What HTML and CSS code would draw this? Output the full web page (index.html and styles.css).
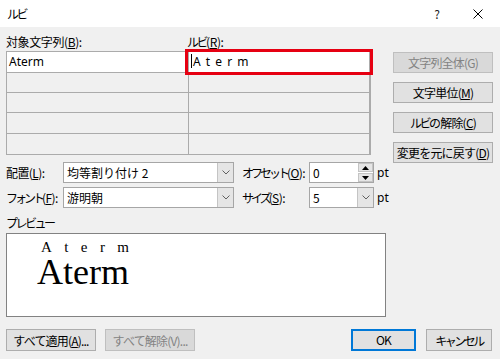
FILE: index.html
```html
<!DOCTYPE html>
<html lang="ja">
<head>
  <meta charset="UTF-8"/>
  <title>ルビ</title>
  <link rel="stylesheet" href="styles.css">
</head>
<body>

  <div class="titlebar">
    <span class="kana">ルビ</span>
    <div class="title-buttons">
      <span class="help">?</span>
      <svg class="close" width="10" height="10" viewBox="0 0 10 10">
        <path d="M0.5 0.5 L9.5 9.5 M9.5 0.5 L0.5 9.5" stroke="#000" stroke-width="1" fill="none"/>
      </svg>
    </div>
  </div>

  <div class="dialog">

    <div class="top-section">
      <div class="ruby-area">
        <div class="col-labels">
          <span>対象文字列(<u>B</u>):</span>
          <span><span class="kana">ルビ</span>(<u>R</u>):</span>
        </div>
        <div class="ruby-grid">
          <div class="cell active">Aterm</div>
          <div class="cell active"><span class="caret"></span><span class="spaced">A t e r m</span></div>
          <div class="cell"></div><div class="cell"></div>
          <div class="cell"></div><div class="cell"></div>
          <div class="cell"></div><div class="cell"></div>
          <div class="cell"></div><div class="cell"></div>
        </div>
        <!-- annotation box -->
        <div class="highlight"></div>
      </div>

      <div class="side-buttons">
        <button class="btn" disabled>文字列全体(G)</button>
        <button class="btn">文字単位(<u>M</u>)</button>
        <button class="btn"><span class="kana">ルビ</span>の解除(<u>C</u>)</button>
        <button class="btn">変更を元に戻す(<u>D</u>)</button>
      </div>
    </div>

    <div class="options">
      <label>配置(<u>L</u>):</label>
      <div class="combo">
        <span class="combo-text">均等割り付け 2</span>
        <span class="combo-arrow"><svg width="8" height="5" viewBox="0 0 8 5"><path d="M0.5 0.5 L4 4 L7.5 0.5" stroke="#606060" fill="none"/></svg></span>
      </div>
      <label class="opt-label"><span class="kana">オフセット</span>(<u>O</u>):</label>
      <div class="combo spin">
        <span class="combo-text">0</span>
        <span class="spin-buttons">
          <span class="spin-btn"><svg width="7" height="4" viewBox="0 0 7 4"><path d="M0 4 L3.5 0 L7 4 Z" fill="#000"/></svg></span>
          <span class="spin-btn"><svg width="7" height="4" viewBox="0 0 7 4"><path d="M0 0 L3.5 4 L7 0 Z" fill="#000"/></svg></span>
        </span>
      </div>
      <span class="unit">pt</span>

      <label><span class="kana">フォント</span>(<u>F</u>):</label>
      <div class="combo">
        <span class="combo-text">游明朝</span>
        <span class="combo-arrow"><svg width="8" height="5" viewBox="0 0 8 5"><path d="M0.5 0.5 L4 4 L7.5 0.5" stroke="#606060" fill="none"/></svg></span>
      </div>
      <label class="opt-label"><span class="kana">サイズ</span>(<u>S</u>):</label>
      <div class="combo">
        <span class="combo-text">5</span>
        <span class="combo-arrow"><svg width="8" height="5" viewBox="0 0 8 5"><path d="M0.5 0.5 L4 4 L7.5 0.5" stroke="#606060" fill="none"/></svg></span>
      </div>
      <span class="unit">pt</span>
    </div>

    <div class="preview-label kana">プレビュー</div>
    <div class="preview">
      <div class="preview-ruby">
        <span>A</span><span>t</span><span>e</span><span>r</span><span>m</span>
      </div>
      <div class="preview-base">Aterm</div>
    </div>

    <div class="bottom-buttons">
      <button class="btn wide">すべて適用(<u>A</u>)...</button>
      <button class="btn wide" disabled>すべて解除(V)...</button>
      <span class="spacer"></span>
      <button class="btn ok">OK</button>
      <button class="btn cancel"><span class="kana">キャンセル</span></button>
    </div>

  </div>

</body>
</html>
```

FILE: styles.css
```css
body {
  margin: 0;
  width: 500px;
  height: 359px;
  overflow: hidden;
  background-color: #f0f0f0;
  font-family: "Noto Sans CJK JP", "Noto Sans", sans-serif;
  font-size: 12px;
  color: #000;
  white-space: nowrap;
}

u {
  text-decoration: underline;
  text-underline-offset: 1px;
}

/* katakana is set narrow in the dialog font */
.kana {
  letter-spacing: -2.5px;
}

.titlebar {
  height: 27px;
  background-color: #fff;
  display: flex;
  justify-content: space-between;
  align-items: center;
  padding: 0 17px 0 7px;
}

.title-buttons {
  display: flex;
  align-items: center;
  gap: 33px;
}

.help {
  font-size: 12px;
  color: #222;
}

.dialog {
  padding: 8px 0 0 6px;
}

/* top: ruby grid + buttons */
.top-section {
  display: flex;
  align-items: flex-start;
  height: 127px;
}

.ruby-area {
  position: relative;
  width: 367px;
}

.col-labels {
  display: grid;
  grid-template-columns: 181px 180px;
  height: 14px;
  line-height: 14px;
  margin-bottom: 2px;
  letter-spacing: -0.4px;
}

.ruby-grid {
  display: grid;
  grid-template-columns: 181px 180px;
  grid-template-rows: 20px 19px 19px 20px 20px;
  gap: 1px;
  width: 363px;
  background-color: #ababab;
  border: 1px solid #ababab;
}

.cell {
  background-color: #f0f0f0;
  line-height: 20px;
  padding-left: 2px;
  font-family: "Noto Sans", "Noto Sans CJK JP", sans-serif;
}

.cell.active {
  background-color: #fff;
}

.caret {
  display: inline-block;
  width: 1px;
  height: 14px;
  background: #000;
  vertical-align: -2px;
  margin-right: 1px;
}

.spaced {
  letter-spacing: 1px;
}

.highlight {
  position: absolute;
  left: 179px;
  top: 14px;
  width: 188px;
  height: 26px;
  box-sizing: border-box;
  border: 3px solid #e60012;
}

.side-buttons {
  display: flex;
  flex-direction: column;
  gap: 9px;
  margin-left: 20px;
  margin-top: 17px;
}

.btn {
  font-family: "Noto Sans CJK JP", "Noto Sans", sans-serif;
  font-size: 12px;
  color: #000;
  background-color: #e1e1e1;
  border: 1px solid #adadad;
  height: 21px;
  padding: 0;
  line-height: 17px;
  letter-spacing: -0.8px;
  white-space: nowrap;
}

.btn .kana {
  letter-spacing: -2.5px;
}

.side-buttons .btn {
  width: 100px;
}

.btn:disabled {
  color: #838383;
  background-color: #d9d9d9;
  border-color: #bfbfbf;
}

/* options */
.options {
  display: grid;
  grid-template-columns: 57px 171px 75px 65px auto;
  grid-template-rows: 21px 21px;
  row-gap: 4px;
  align-items: center;
}

.options label {
  line-height: 14px;
  letter-spacing: -0.6px;
}

.options label .kana {
  letter-spacing: -3px;
}

.opt-label {
  padding-left: 8px;
}

.combo {
  display: flex;
  height: 21px;
  box-sizing: border-box;
  background: #fff;
  border: 1px solid #a6a6a6;
}

.combo-text {
  flex: 1;
  line-height: 19px;
  padding-left: 3px;
}

.combo-arrow {
  width: 15px;
  background: #e5e5e5;
  border-left: 1px solid #c4c4c4;
  display: flex;
  align-items: center;
  justify-content: center;
}

.spin-buttons {
  width: 15px;
  display: flex;
  flex-direction: column;
  gap: 1px;
  background: #fff;
  padding-left: 1px;
}

.spin-btn {
  flex: 1;
  background: #e5e5e5;
  border: 1px solid #c4c4c4;
  display: flex;
  align-items: center;
  justify-content: center;
}

.unit {
  padding-left: 3px;
  font-family: "Noto Sans", sans-serif;
}

/* preview */
.preview-label {
  margin-top: 8px;
  line-height: 14px;
  height: 14px;
}

.preview {
  margin-top: 3px;
  height: 82px;
  background: #fff;
  border: 1px solid #828282;
  padding-left: 30px;
  box-sizing: content-box;
  width: 348px;
  font-family: "Liberation Serif", "DejaVu Serif", serif;
}

.preview-ruby {
  display: flex;
  justify-content: space-between;
  width: 88px;
  margin-left: 4px;
  margin-top: 6px;
  font-size: 15px;
  line-height: 15px;
}

.preview-base {
  font-size: 36px;
  line-height: 34px;
}

/* bottom */
.bottom-buttons {
  display: flex;
  width: 486px;
  margin-top: 12px;
  gap: 9px;
}

.bottom-buttons .btn {
  height: 22px;
}

.wide {
  width: 90px;
}

.spacer {
  flex: 1;
}

.ok {
  width: 65px;
  border-color: #0078d7;
  border-width: 2px;
  line-height: 16px;
  margin-right: 1px;
}

.cancel {
  width: 66px;
}
```
